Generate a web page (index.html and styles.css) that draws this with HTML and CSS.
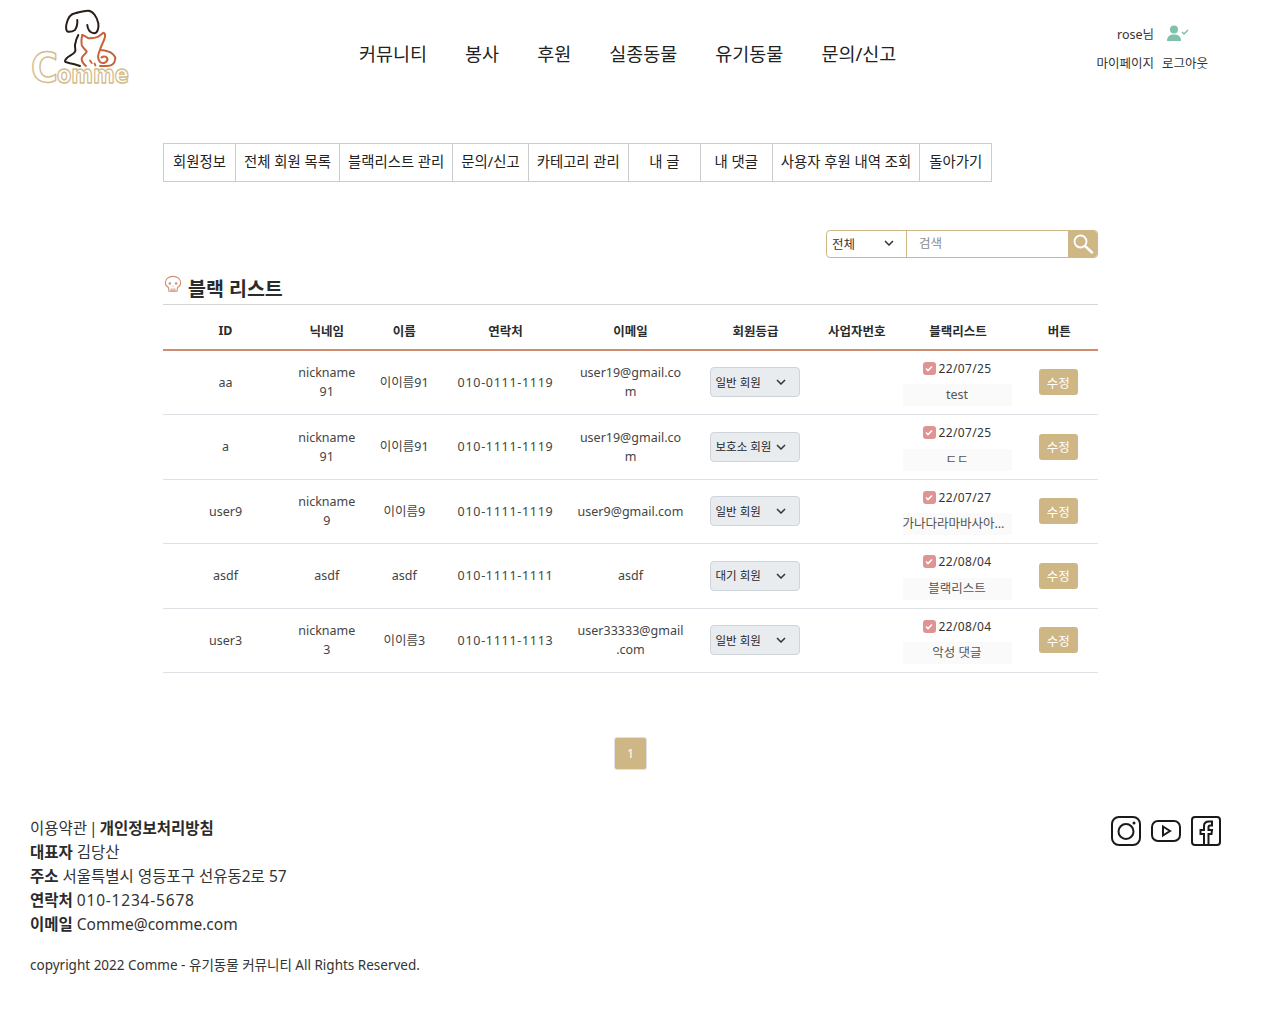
FILE: index.html
```html
<!DOCTYPE html>
<html lang="ko">

<head>
    <meta charset="UTF-8">
    <meta name="viewport" content="width=device-width, initial-scale=1.0">
    <title>Comme - 블랙 리스트</title>
    <link rel="stylesheet" href="styles.css">
</head>

<body>
    <header class="site-header">
        <a class="logo" href="#">
            <svg width="100" height="76" viewBox="0 0 100 76" fill="none" stroke-linecap="round" stroke-linejoin="round">
                <path d="M36.700 13.300 C38 8 41 4 45 3.300 C49 2.500 53 0.500 58.300 0.700 C63 1 67 7 68.300 13.300 C69 18 67.500 23.500 64 23.300 C60 23 57.500 19 57.300 15 M36.700 13.300 C35.500 17 36 21.500 38.300 21.700 C42 22 45 20 45 20 C47 17 47.500 13 47.300 10" stroke="#2a1d1a" stroke-width="2"/>
                <path d="M48.300 25 C46 29 45.500 32 45 35 C44.800 38 46 40 45 41.700 C43 45 38 46 36.700 48.300 C35 50 34.500 51.500 35.500 52 L40 53.300 C44 54 47 55 50 56" stroke="#2a1d1a" stroke-width="2"/>
                <path d="M52.300 25 C54 25.500 56.500 27 58.300 28.300 C62 28.500 65.500 28 68.300 26.700 L73.300 22.700 C75 23 75.200 25 75 26.700 C74.500 31 71 35 70 40 C74 40.500 79 41 81.700 43.300 C85 46 86 48 85 50 C84.500 54 81 56 76.700 56 L70 56" stroke="#c8623a" stroke-width="2"/>
                <path d="M52.300 25 C51.200 29 51 32 51.700 35 C52.500 38 55.500 39 56.700 41.700 C56 44 52 45.500 51.700 48.300 C51.500 52 54 54.500 56 56" stroke="#c8623a" stroke-width="2"/>
                <path d="M70 40 C68 44 67.500 49 70 52 C73 54 77 53 77.500 49.500 C77.500 46.500 73.500 45.500 71.500 47.500" stroke="#c8623a" stroke-width="2"/>
                <path d="M60 50.500 L61.700 53 M64.500 53.500 L65.500 55.500" stroke="#c8623a" stroke-width="1.800"/>
                <text class="logo-c" x="1" y="72" textLength="27" lengthAdjust="spacingAndGlyphs">C</text>
                <text class="logo-rest" x="27" y="72.500" textLength="72" lengthAdjust="spacingAndGlyphs">omme</text>
            </svg>
        </a>
        <nav class="main-nav">
            <a href="#">커뮤니티</a>
            <a href="#">봉사</a>
            <a href="#">후원</a>
            <a href="#">실종동물</a>
            <a href="#">유기동물</a>
            <a href="#">문의/신고</a>
        </nav>
        <div class="user-box">
            <div class="user-top">
                <span>rose님</span>
                <svg width="22" height="16" viewBox="0 0 22 16">
                    <circle cx="7" cy="4.500" r="4" fill="#7fc1ab"/>
                    <path d="M0 16 C0 11 3 9.500 7 9.500 C11 9.500 14 11 14 16 Z" fill="#7fc1ab"/>
                    <path d="M15 7 L17 9 L21 5" fill="none" stroke="#7fc1ab" stroke-width="1.500"/>
                </svg>
            </div>
            <div class="user-links">
                <a href="#">마이페이지</a>
                <a href="#">로그아웃</a>
            </div>
        </div>
    </header>

    <main class="content">
        <div class="admin-tabs">
            <a class="tab" href="#">회원정보</a>
            <a class="tab" href="#">전체 회원 목록</a>
            <a class="tab" href="#">블랙리스트 관리</a>
            <a class="tab" href="#">문의/신고</a>
            <a class="tab" href="#">카테고리 관리</a>
            <a class="tab" href="#">내 글</a>
            <a class="tab" href="#">내 댓글</a>
            <a class="tab" href="#">사용자 후원 내역 조회</a>
            <a class="tab" href="#">돌아가기</a>
        </div>

        <form class="search-row">
            <div class="search-box">
                <div class="search-select">
                    <span>전체</span>
                    <svg class="chevron" width="10" height="6" viewBox="0 0 10 6"><path d="M1 1 L5 5 L9 1"/></svg>
                </div>
                <div class="search-input">검색</div>
                <button class="search-btn" type="button">
                    <svg width="22" height="22" viewBox="0 0 22 22" fill="none" stroke="#fff" stroke-width="1.800" stroke-linecap="round">
                        <circle cx="8.500" cy="8.500" r="6"/>
                        <path d="M13 13 L20 19.500" stroke-width="2.400"/>
                    </svg>
                </button>
            </div>
        </form>

        <h2 class="list-title">
            <svg class="skull" width="18" height="18" viewBox="0 0 20 20" fill="none" stroke="#cf9078" stroke-width="1.200">
                <path d="M10 1.500 C5 1.500 1.500 4.500 1.500 9 C1.500 11.500 3 13 5 14 L5.500 18 L14.500 18 L15 14 C17 13 18.500 11.500 18.500 9 C18.500 4.500 15 1.500 10 1.500 Z"/>
                <circle cx="6.500" cy="9.500" r="1.400" fill="#cf9078" stroke="none"/>
                <circle cx="13.500" cy="9.500" r="1.400" fill="#cf9078" stroke="none"/>
                <path d="M8 18 V15 M10 18 V15 M12 18 V15 M9.500 12.500 L10.500 12.500"/>
            </svg>
            블랙 리스트
        </h2>

        <table class="black-table">
            <colgroup>
                <col class="col-lg"><col class="col-sm"><col class="col-sm"><col class="col-lg"><col class="col-lg"><col class="col-lg"><col class="col-sm"><col class="col-lg"><col class="col-sm">
            </colgroup>
            <thead>
                <tr>
                    <th>ID</th>
                    <th>닉네임</th>
                    <th>이름</th>
                    <th>연락처</th>
                    <th>이메일</th>
                    <th>회원등급</th>
                    <th>사업자번호</th>
                    <th>블랙리스트</th>
                    <th>버튼</th>
                </tr>
            </thead>
            <tbody>
                <tr>
                    <td>aa</td>
                    <td>nickname91</td>
                    <td>이이름91</td>
                    <td class="phone">010-0111-1119</td>
                    <td>user19@gmail.com</td>
                    <td><div class="grade-select"><span>일반 회원</span><svg class="chevron" width="10" height="6" viewBox="0 0 10 6"><path d="M1 1 L5 5 L9 1"/></svg></div></td>
                    <td></td>
                    <td>
                        <div class="black-date"><span class="check"><svg width="8" height="7" viewBox="0 0 8 7"><path d="M1 3.500 L3 5.500 L7 1.500"/></svg></span>22/07/25</div>
                        <div class="black-reason">test</div>
                    </td>
                    <td><button class="edit-btn" type="button">수정</button></td>
                </tr>
                <tr>
                    <td>a</td>
                    <td>nickname91</td>
                    <td>이이름91</td>
                    <td class="phone">010-1111-1119</td>
                    <td>user19@gmail.com</td>
                    <td><div class="grade-select"><span>보호소 회원</span><svg class="chevron" width="10" height="6" viewBox="0 0 10 6"><path d="M1 1 L5 5 L9 1"/></svg></div></td>
                    <td></td>
                    <td>
                        <div class="black-date"><span class="check"><svg width="8" height="7" viewBox="0 0 8 7"><path d="M1 3.500 L3 5.500 L7 1.500"/></svg></span>22/07/25</div>
                        <div class="black-reason">ㄷㄷ</div>
                    </td>
                    <td><button class="edit-btn" type="button">수정</button></td>
                </tr>
                <tr>
                    <td>user9</td>
                    <td>nickname9</td>
                    <td>이이름9</td>
                    <td class="phone">010-1111-1119</td>
                    <td>user9@gmail.com</td>
                    <td><div class="grade-select"><span>일반 회원</span><svg class="chevron" width="10" height="6" viewBox="0 0 10 6"><path d="M1 1 L5 5 L9 1"/></svg></div></td>
                    <td></td>
                    <td>
                        <div class="black-date"><span class="check"><svg width="8" height="7" viewBox="0 0 8 7"><path d="M1 3.500 L3 5.500 L7 1.500"/></svg></span>22/07/27</div>
                        <div class="black-reason">가나다라마바사아자차</div>
                    </td>
                    <td><button class="edit-btn" type="button">수정</button></td>
                </tr>
                <tr>
                    <td>asdf</td>
                    <td>asdf</td>
                    <td>asdf</td>
                    <td class="phone">010-1111-1111</td>
                    <td>asdf</td>
                    <td><div class="grade-select"><span>대기 회원</span><svg class="chevron" width="10" height="6" viewBox="0 0 10 6"><path d="M1 1 L5 5 L9 1"/></svg></div></td>
                    <td></td>
                    <td>
                        <div class="black-date"><span class="check"><svg width="8" height="7" viewBox="0 0 8 7"><path d="M1 3.500 L3 5.500 L7 1.500"/></svg></span>22/08/04</div>
                        <div class="black-reason">블랙리스트</div>
                    </td>
                    <td><button class="edit-btn" type="button">수정</button></td>
                </tr>
                <tr>
                    <td>user3</td>
                    <td>nickname3</td>
                    <td>이이름3</td>
                    <td class="phone">010-1111-1113</td>
                    <td>user33333@gmail.com</td>
                    <td><div class="grade-select"><span>일반 회원</span><svg class="chevron" width="10" height="6" viewBox="0 0 10 6"><path d="M1 1 L5 5 L9 1"/></svg></div></td>
                    <td></td>
                    <td>
                        <div class="black-date"><span class="check"><svg width="8" height="7" viewBox="0 0 8 7"><path d="M1 3.500 L3 5.500 L7 1.500"/></svg></span>22/08/04</div>
                        <div class="black-reason">악성 댓글</div>
                    </td>
                    <td><button class="edit-btn" type="button">수정</button></td>
                </tr>
            </tbody>
        </table>

        <div class="pagination">
            <a class="page-num" href="#">1</a>
        </div>
    </main>

    <footer class="site-footer">
        <div class="footer-info">
            <p class="footer-terms">이용약관 | <b>개인정보처리방침</b></p>
            <p><b>대표자</b> 김당산</p>
            <p><b>주소</b> 서울특별시 영등포구 선유동2로 57</p>
            <p><b>연락처</b> <span class="footer-phone">010-1234-5678</span></p>
            <p><b>이메일</b> Comme@comme.com</p>
            <p class="copyright">copyright 2022 Comme - 유기동물 커뮤니티 All Rights Reserved.</p>
        </div>
        <div class="social">
            <svg width="30" height="30" viewBox="0 0 30 30" fill="none" stroke="#1a1a1a" stroke-width="2">
                <rect x="1" y="1" width="28" height="28" rx="7"/>
                <circle cx="15" cy="15.500" r="7.500"/>
                <circle cx="23" cy="7" r="1.500" fill="#1a1a1a" stroke="none"/>
            </svg>
            <svg width="30" height="30" viewBox="0 0 30 30" fill="none" stroke="#1a1a1a" stroke-width="2">
                <rect x="1" y="5" width="28" height="20" rx="6"/>
                <path d="M12 10.500 L19 15 L12 19.500 Z"/>
            </svg>
            <svg width="30" height="30" viewBox="0 0 30 30" fill="none" stroke="#1a1a1a" stroke-width="2">
                <rect x="1" y="1" width="28" height="28" rx="3"/>
                <path d="M13 29 V18 H9.500 V14 H13 V10 C13 7 15 5.500 18 5.500 H21 V9.500 H19 C18 9.500 17.500 10 17.500 11 V14 H21 L20.500 18 H17.500 V29"/>
            </svg>
        </div>
    </footer>
</body>

</html>
```
FILE: styles.css
```css
/* General */

body {
    font-family: 'Noto Sans', 'Noto Sans CJK KR', sans-serif;
    margin: 0;
    background: #ffffff;
    color: #212529;
    font-size: 13px;
}

a {
    color: inherit;
    text-decoration: none;
}

/* Header */

.site-header {
    display: flex;
    align-items: flex-start;
    height: 143px;
    padding: 10px 65px 0 30px;
    box-sizing: border-box;
}

.logo {
    display: block;
    width: 100px;
    height: 76px;
}

.logo svg {
    overflow: visible;
}

.logo-c,
.logo-rest {
    font-family: 'DejaVu Sans', sans-serif;
    font-weight: bold;
    fill: #ffffff;
    stroke: #d4bd8b;
    stroke-width: 1.500px;
}

.logo-c {
    font-size: 40px;
}

.logo-rest {
    font-size: 25px;
}

.main-nav {
    display: flex;
    gap: 38px;
    margin-left: 229px;
    margin-top: 31px;
    font-size: 18.500px;
    line-height: 26px;
    color: #222222;
}

.user-box {
    margin-left: auto;
    margin-top: 12px;
    color: #333333;
    font-size: 12.500px;
}

.user-top {
    display: flex;
    justify-content: flex-end;
    align-items: center;
    gap: 13px;
    height: 22px;
    padding-right: 19px;
}

.user-links {
    display: flex;
    gap: 8px;
    margin-top: 11px;
    line-height: 18px;
}

/* Content */

.content {
    width: 935px;
    margin-left: 163px;
}

.admin-tabs {
    display: flex;
    height: 39px;
}

.tab {
    display: flex;
    align-items: center;
    justify-content: center;
    min-width: 73px;
    box-sizing: border-box;
    padding: 0 8px 4px;
    border: 1px solid #cccccc;
    margin-right: -1px;
    font-size: 14.400px;
    color: #222222;
    white-space: nowrap;
}

/* Search */

.search-row {
    display: flex;
    justify-content: flex-end;
    margin-top: 48px;
}

.search-box {
    display: flex;
    width: 272px;
    height: 28px;
    box-sizing: border-box;
    border: 1px solid #cfb785;
    border-radius: 4px;
    overflow: hidden;
}

.search-select {
    display: flex;
    align-items: center;
    justify-content: space-between;
    width: 80px;
    box-sizing: border-box;
    padding: 0 12px 2px 5px;
    border-right: 1px solid #cfb785;
    color: #333333;
    font-size: 12.500px;
}

.search-input {
    flex: 1;
    padding-left: 12px;
    line-height: 25px;
    color: #8a8a8a;
    font-size: 12.500px;
}

.search-btn {
    width: 29px;
    padding: 0;
    border: none;
    background: #cfb785;
    display: flex;
    align-items: center;
    justify-content: center;
}

.chevron {
    fill: none;
    stroke: #333333;
    stroke-width: 1.500;
}

/* Table */

.list-title {
    display: flex;
    align-items: center;
    gap: 6px;
    margin: 13px 0 0;
    height: 32px;
    padding-left: 1px;
    font-size: 19.500px;
    font-weight: bold;
    color: #2b2b2b;
}

.skull {
    margin-bottom: 6px;
}

.black-table {
    width: 935px;
    margin-top: 1px;
    border-collapse: collapse;
    table-layout: fixed;
    border-top: 1px solid #d5d5d5;
}

.col-lg {
    width: 125px;
}

.col-sm {
    width: 77.500px;
}

.black-table th {
    height: 45px;
    padding: 7px 0 0;
    box-sizing: border-box;
    border-bottom: 2px solid #cd8d6e;
    font-size: 12.500px;
    font-weight: bold;
    color: #2b2b2b;
}

.black-table td {
    height: 63.500px;
    padding: 0 8px;
    border-bottom: 1px solid #dee2e6;
    font-size: 12.500px;
    line-height: 19px;
    color: #444444;
    text-align: center;
    overflow-wrap: break-word;
}

.black-table td:nth-child(n+6) {
    padding: 0 9px 0 7px;
}

.black-table td.phone {
    letter-spacing: 0.700px;
    white-space: nowrap;
}

.grade-select {
    display: flex;
    align-items: center;
    justify-content: space-between;
    width: 90px;
    height: 30px;
    margin: 0 auto;
    padding: 0 5px;
    box-sizing: border-box;
    border: 1px solid #ced4da;
    border-radius: 4px;
    background: #e9ecef;
    color: #212529;
    font-size: 11.500px;
    white-space: nowrap;
}

.grade-select .chevron {
    margin-right: 8px;
    flex: none;
}

.black-date {
    display: flex;
    align-items: center;
    justify-content: center;
    gap: 3px;
    height: 20px;
    color: #333333;
    font-size: 12px;
    letter-spacing: 0.350px;
}

.check {
    display: flex;
    align-items: center;
    justify-content: center;
    width: 13px;
    height: 13px;
    border-radius: 3px;
    background: #e09393;
}

.check svg {
    fill: none;
    stroke: #ffffff;
    stroke-width: 1.600;
}

.black-reason {
    width: 109px;
    height: 22px;
    margin: 6px auto 0;
    background: #fafafa;
    line-height: 22px;
    overflow: hidden;
    white-space: nowrap;
    text-overflow: ellipsis;
    color: #555555;
}

.edit-btn {
    width: 39px;
    height: 26px;
    padding: 0;
    border: none;
    border-radius: 3px;
    background: #cfb785;
    color: #ffffff;
    font-family: inherit;
    font-size: 12.500px;
}

/* Pagination */

.pagination {
    display: flex;
    justify-content: center;
    margin-top: 64px;
}

.page-num {
    width: 33px;
    height: 33px;
    box-sizing: border-box;
    border: 1px solid #dee2e6;
    border-radius: 3px;
    background: #cfb785;
    color: #ffffff;
    font-size: 12.500px;
    line-height: 31px;
    text-align: center;
}

/* Footer */

.site-footer {
    display: flex;
    justify-content: space-between;
    margin-top: 46px;
    padding: 0 52px 48px 30px;
}

.footer-info p {
    margin: 0;
    font-size: 15.500px;
    line-height: 24px;
    color: #333333;
}

.footer-info .footer-terms {
    word-spacing: -2px;
}

.footer-info b {
    color: #2b2b2b;
}

.footer-phone {
    letter-spacing: 0.800px;
}

.footer-info .copyright {
    margin-top: 17px;
    font-size: 13.500px;
}

.social {
    display: flex;
    gap: 10px;
}
```
